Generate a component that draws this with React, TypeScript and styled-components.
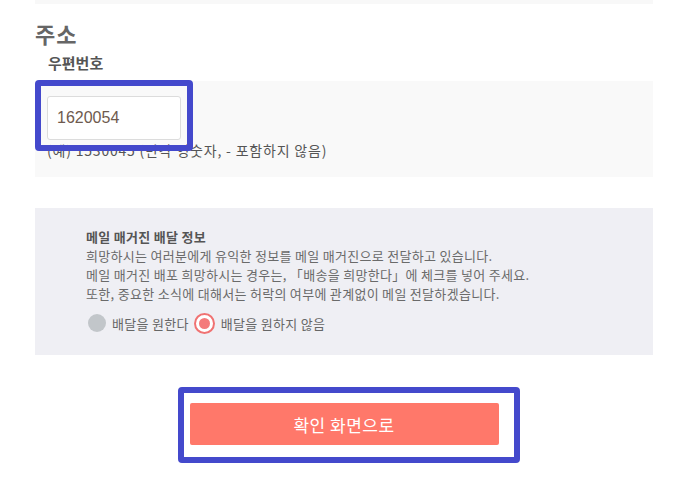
import React from "react";
import styled, { createGlobalStyle } from "styled-components";

const GlobalStyle = createGlobalStyle`
  body {
    margin: 0;
    background: #fff;
    font-family: "Noto Sans CJK KR", "Noto Sans", sans-serif;
  }
`;

const Page = styled.div`
  width: 618px;
  margin-left: 35px;
  padding-bottom: 40px;
`;

const TopStrip = styled.div`
  height: 4px;
  background: #f8f8f8;
`;

const Heading = styled.h2`
  margin: 14px 0 0;
  font-size: 22px;
  line-height: 30px;
  font-weight: 700;
  letter-spacing: 1px;
  color: #666;
`;

const FieldLabel = styled.div`
  margin-top: 5px;
  padding-left: 13px;
  font-size: 15px;
  line-height: 20px;
  font-weight: 700;
  color: #555;
`;

const FieldBox = styled.div`
  margin-top: 8px;
  background: #f9f9f9;
  padding: 15px 12px 17px;
`;

const InputWrap = styled.div`
  position: relative;
  width: 134px;
`;

const Highlight = styled.div<{ $inset: string }>`
  position: absolute;
  inset: ${(p) => p.$inset};
  border: 6px solid #4449cc;
  border-radius: 4px;
  pointer-events: none;
  z-index: 2;
`;

const TextInput = styled.input`
  box-sizing: border-box;
  display: block;
  width: 134px;
  height: 44px;
  padding: 0 9px;
  border: 1px solid #dcdcdc;
  border-radius: 3px;
  background: #fff;
  font-family: "Liberation Sans", "Noto Sans CJK KR", sans-serif;
  font-size: 16px;
  color: #6e5a4e;
  outline: none;
`;

const Hint = styled.div`
  margin-top: 1px;
  font-size: 14px;
  line-height: 19px;
  letter-spacing: 0.8px;
  color: #555;
`;

const MailBox = styled.div`
  margin-top: 31px;
  background: #efeff4;
  padding: 19px 20px 21px 51px;
  font-size: 13px;
  line-height: 19px;
  letter-spacing: 0.3px;
  color: #6a6a6a;
`;

const MailTitle = styled.div`
  font-weight: 700;
  color: #555;
`;

const RadioRow = styled.div`
  display: flex;
  align-items: center;
  margin-top: 9px;
  height: 22px;
`;

const RadioOption = styled.label`
  display: flex;
  align-items: center;
  gap: 6px;
  margin-right: 3px;
  font-size: 13px;
  color: #666;
`;

const RadioDot = styled.span<{ $checked?: boolean }>`
  box-sizing: border-box;
  display: inline-flex;
  align-items: center;
  justify-content: center;
  flex: none;
  width: ${(p) => (p.$checked ? 21 : 18)}px;
  height: ${(p) => (p.$checked ? 21 : 18)}px;
  margin-left: 2px;
  border-radius: 50%;
  background: ${(p) => (p.$checked ? "#fff" : "#c2c6ca")};
  border: ${(p) => (p.$checked ? "2px solid #f07272" : "none")};

  &::after {
    content: "";
    display: ${(p) => (p.$checked ? "block" : "none")};
    width: 11px;
    height: 11px;
    border-radius: 50%;
    background: #f47b7b;
  }
`;

const ButtonArea = styled.div`
  display: flex;
  justify-content: center;
  margin-top: 48px;
`;

const ButtonWrap = styled.div`
  position: relative;
`;

const SubmitButton = styled.button`
  display: block;
  width: 309px;
  height: 42px;
  border: none;
  border-radius: 2px;
  background: #ff786a;
  color: #fff;
  font-family: "Noto Sans CJK KR", sans-serif;
  font-size: 17px;
  letter-spacing: 0.5px;
  cursor: pointer;
`;

export default function App() {
  return (
    <>
      <GlobalStyle />
      <Page>
        <TopStrip />
        <Heading>주소</Heading>
        <FieldLabel>우편번호</FieldLabel>
        <FieldBox>
          <InputWrap>
            <TextInput defaultValue="1620054" />
            <Highlight $inset="-16px -12px -11px -12px" />
          </InputWrap>
          <Hint>(예) 1530045 (반각 영숫자, - 포함하지 않음)</Hint>
        </FieldBox>
        <MailBox>
          <MailTitle>메일 매거진 배달 정보</MailTitle>
          <div>희망하시는 여러분에게 유익한 정보를 메일 매거진으로 전달하고 있습니다.</div>
          <div>메일 매거진 배포 희망하시는 경우는, 「배송을 희망한다」에 체크를 넣어 주세요.</div>
          <div>또한, 중요한 소식에 대해서는 허락의 여부에 관계없이 메일 전달하겠습니다.</div>
          <RadioRow>
            <RadioOption>
              <RadioDot />
              배달을 원한다
            </RadioOption>
            <RadioOption>
              <RadioDot $checked />
              배달을 원하지 않음
            </RadioOption>
          </RadioRow>
        </MailBox>
        <ButtonArea>
          <ButtonWrap>
            <SubmitButton>확인 화면으로</SubmitButton>
            <Highlight $inset="-16px -21px -18px -12px" />
          </ButtonWrap>
        </ButtonArea>
      </Page>
    </>
  );
}
